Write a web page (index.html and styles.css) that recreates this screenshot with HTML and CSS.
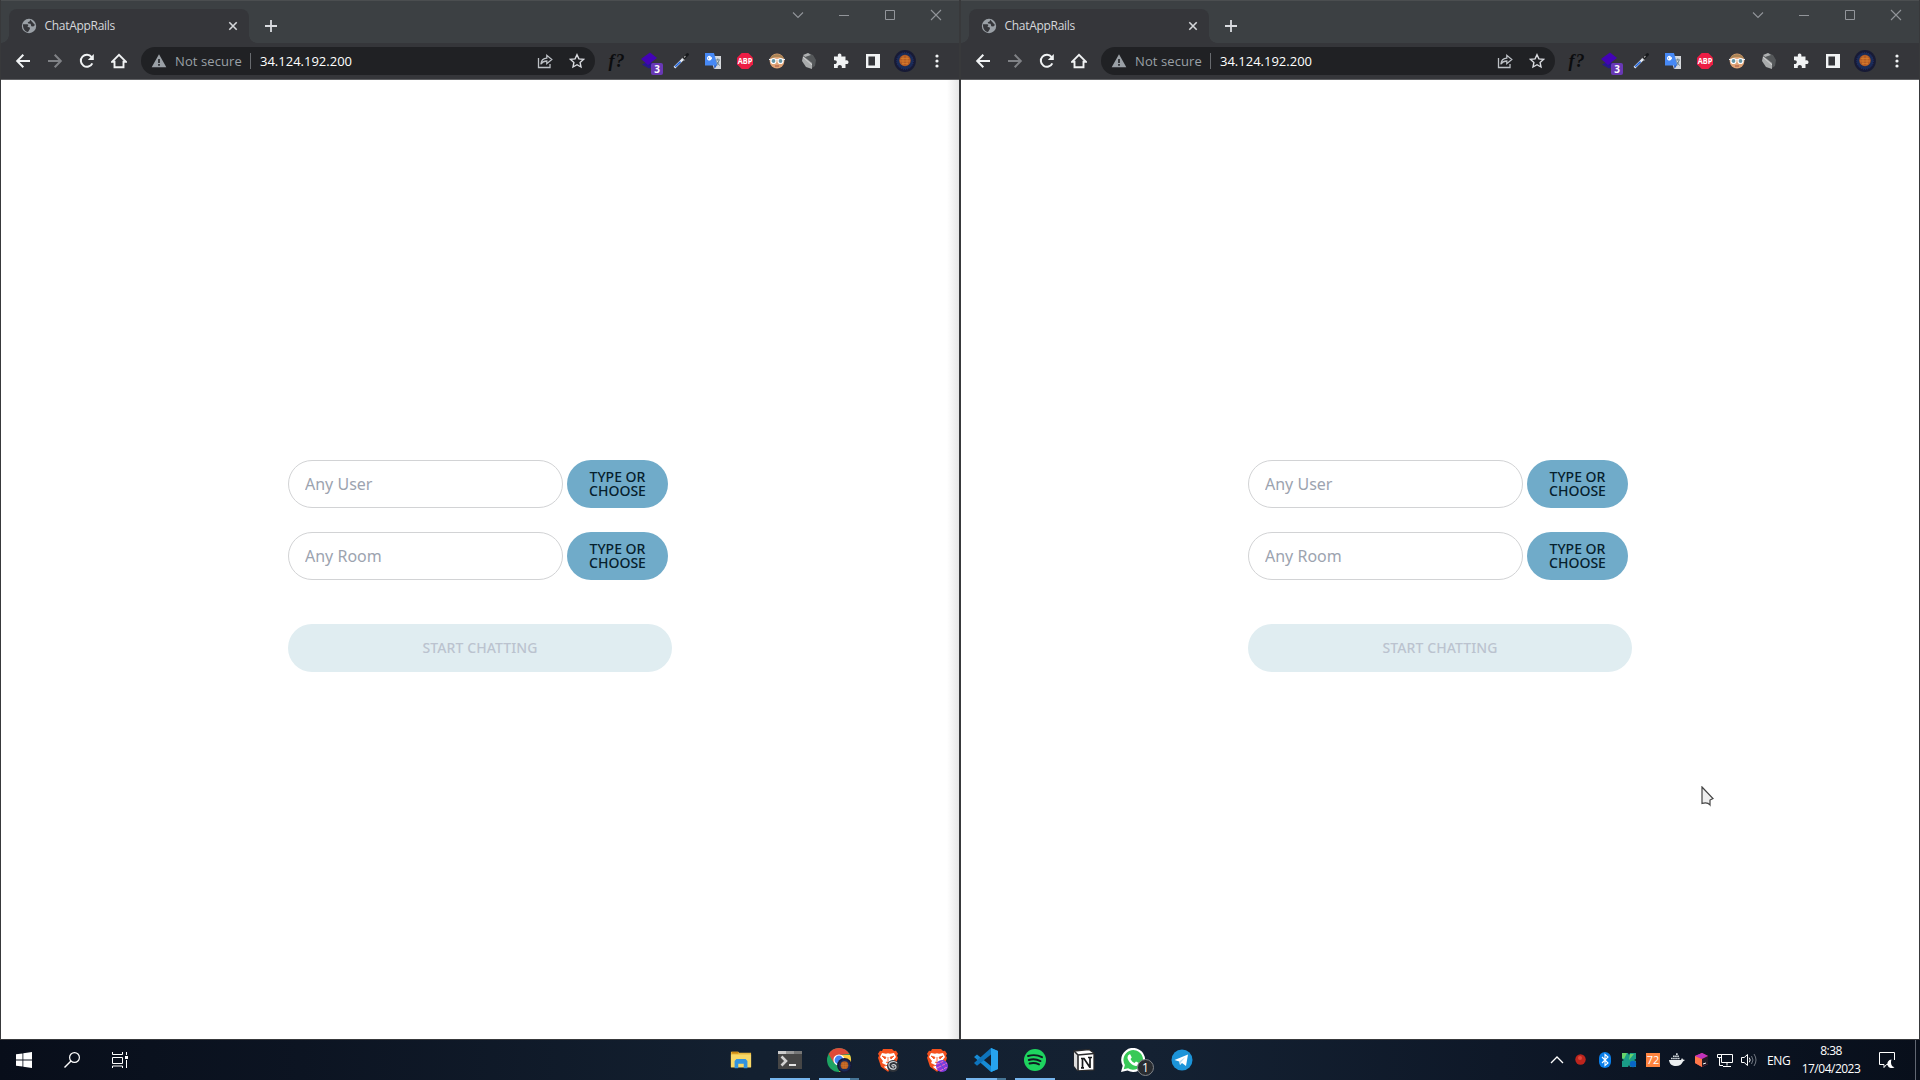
FILE: index.html
```html
<!DOCTYPE html>
<html lang="en">
<head>
<meta charset="utf-8">
<title>ChatAppRails</title>
<link rel="stylesheet" href="styles.css">
</head>
<body>
<svg class="sprite" aria-hidden="true">
  <symbol id="globe" viewBox="0 0 16 16"><circle cx="8" cy="8" r="7.2" fill="#9aa0a6"/><path d="M2 6.2h4.2c1 0 1.4 1 .8 1.8l-.6 1 2.2.2.4 1.6-2 3.2C3.8 13.400 1.800 10.600 2 6.200zM9.200 1.700 8.600 3.600 6.700 4.300 7.300 5.600 9.600 5.800 10.300 8.200 12.300 8.500 14 7" fill="#35363a"/></symbol>
  <symbol id="x" viewBox="0 0 16 16"><path d="M4.300 4.300l7.400 7.400M11.700 4.300l-7.400 7.400" stroke="#d5d7da" stroke-width="1.600"/></symbol>
  <symbol id="plus" viewBox="0 0 16 16"><path d="M8 2v12M2 8h12" stroke="#dadce0" stroke-width="1.800"/></symbol>
  <symbol id="chev" viewBox="0 0 16 16"><path d="M3 5.500l5 5 5-5" fill="none" stroke="#92959a" stroke-width="1.100"/></symbol>
  <symbol id="min" viewBox="0 0 16 16"><path d="M3 8.500h10" stroke="#92959a"/></symbol>
  <symbol id="max" viewBox="0 0 16 16"><path d="M3.500 3.500h9v9h-9z" fill="none" stroke="#92959a"/></symbol>
  <symbol id="close" viewBox="0 0 16 16"><path d="M3 3l10 10M13 3L3 13" stroke="#92959a" stroke-width="1.100"/></symbol>
  <symbol id="back" viewBox="0 0 16 16"><path d="M15 8H2.500M8.300 1.800L2.200 8l6.100 6.200" fill="none" stroke="currentColor" stroke-width="2"/></symbol>
  <symbol id="reload" viewBox="0 0 16 16"><path d="M13.300 10.300A6 6 0 1 1 12.600 4.100" fill="none" stroke="#f1f3f4" stroke-width="2"/><path d="M14.800 1v6H8.800z" fill="#f1f3f4"/></symbol>
  <symbol id="home" viewBox="0 0 16 16"><path d="M1.200 8.700L8 1.800l6.800 6.900h-2.300v5.500h-9V8.700z" fill="none" stroke="#f1f3f4" stroke-width="1.900"/></symbol>
  <symbol id="warn" viewBox="0 0 16 16"><path d="M8 1.300l7.300 13H.7z" fill="#9aa0a6"/><path d="M8 6v4M8 11v1.800" stroke="#202124" stroke-width="1.600"/></symbol>
  <symbol id="share" viewBox="0 0 16 16"><path d="M1.500 5v9.500h11.500V11M3.800 11.200c.4-4 2.500-6 6-6.100V2.300l5 4.200-5 4.200V8c-2.700 0-4.500.9-6 3.200z" fill="none" stroke="#bdc1c6" stroke-width="1.300"/></symbol>
  <symbol id="star" viewBox="0 0 16 16"><path d="M8 1.700l1.900 4.200 4.600.5-3.400 3 .9 4.600L8 11.700 4 14l.9-4.600-3.400-3 4.600-.5z" fill="none" stroke="#dadce0" stroke-width="1.400"/></symbol>
  <symbol id="stack" viewBox="0 0 20 20"><path d="M3 13.500l6-3 8 3-7 4z" fill="#26188c"/><path d="M2 8l9-6.500L18 7l-9 7z" fill="#4303b5"/></symbol>
  <symbol id="pen" viewBox="0 0 16 16"><path d="M10.500 5.500l4-4" stroke="#17191c" stroke-width="2.800" stroke-linecap="round"/><path d="M9 5l2.500 2.500M11 4.500l1.500-1.500" stroke="#9b9b9b" stroke-width="1.200"/><path d="M1.400 14.600L10 6.200" stroke="#e7edf7" stroke-width="2.400"/><path d="M2.200 13.800l5.400-5.200" stroke="#2366dc" stroke-width="1.500"/></symbol>
  <symbol id="translate" viewBox="0 0 16 16"><path d="M5 3h11v13H9z" fill="#d5d8dc"/><path d="M9 12h3l-2.500 4z" fill="#265bc7"/><path d="M0 0h9l3.500 12.500H0z" fill="#4789f5"/><path d="M7 5H4.700v1.200h1A1.700 1.700 0 1 1 5.500 4" fill="none" stroke="#fff" stroke-width="1.300"/><path d="M10.500 7h4.500M12.800 5.500V7M14 7.500c-.5 2-1.500 3.500-2.500 4.500M11.500 8.500l3 4" fill="none" stroke="#69808a"/></symbol>
  <symbol id="abp" viewBox="0 0 16 16"><path d="M4.700 0h6.600L16 4.700v6.600L11.300 16H4.700L0 11.300V4.700z" fill="#ed1e45"/><text x="8" y="11" text-anchor="middle" font-family="Open Sans,sans-serif" font-weight="700" font-size="8.500" textLength="14.600" lengthAdjust="spacingAndGlyphs" fill="#fff">ABP</text></symbol>
  <symbol id="face" viewBox="0 0 16 16"><circle cx="8" cy="8" r="7.400" fill="#e0a375"/><path d="M1 6C2.500-.5 13.500-.5 15 6L10 4 6 4z" fill="#aa8556"/><path d="M0 6.500h16" stroke="#f4f4f4" stroke-width="1.200"/><circle cx="4.500" cy="8" r="2.500" fill="#6695a5" stroke="#fff" stroke-width="1.200"/><circle cx="11.500" cy="8" r="2.500" fill="#6695a5" stroke="#fff" stroke-width="1.200"/><path d="M6 13h4" stroke="#a65242"/></symbol>
  <symbol id="dark" viewBox="0 0 16 16"><path d="M7 0l5 2 3 5-1 6-3 2L3 5z" fill="#55585a"/><path d="M2 2l5-2 3 2-6 2z" fill="#adafb0"/><path d="M2 3l9 7v6l-6-2-4-6z" fill="#a9abac"/><path d="M2 4l9 8" stroke="#d2d2d2"/></symbol>
  <symbol id="puzzle" viewBox="0 0 16 16"><path d="M1 3.500h4C4.300 1.500 5.300.5 6.600.5s2.300 1 1.700 3h4.200v4c2-.6 3 .4 3 1.700s-1 2.300-3 1.700v4.100H8.800c.6-2-.6-3-2-3s-2.500 1-2 3H1v-4c2 .3 2.800-.8 2.800-2S3 7 1 7.300z" fill="#f1f3f4"/></symbol>
  <symbol id="panel" viewBox="0 0 16 16"><path d="M1 1h14v14H1zM3.400 3.400v9.200H10V3.400z" fill="#f1f3f4" fill-rule="evenodd"/></symbol>
  <symbol id="avatar" viewBox="0 0 22 22"><circle cx="11" cy="11" r="10.900" fill="#171a35"/><circle cx="11" cy="11" r="8.300" fill="#192c58" stroke="#242f70" stroke-dasharray="1 1"/><circle cx="11" cy="10.500" r="5.700" fill="#b45b25"/><path d="M7 8.500h8M6 11h10M8 13.500h6M9 6v9M13 6v9" stroke="#dd812c" stroke-width=".7"/></symbol>
  <symbol id="dots" viewBox="0 0 16 16"><g fill="#f1f3f4"><circle cx="8" cy="3" r="1.600"/><circle cx="8" cy="8" r="1.600"/><circle cx="8" cy="13" r="1.600"/></g></symbol>
  <symbol id="brave" viewBox="0 0 22 24"><path d="M6 1h9l2 2 2-.2 2 3-1 2 1 2-3 9-7 5-7-5-3-9 1-2-1-2 2-3 2 .2z" fill="#f4511e"/><path d="M5 5l4 .7 2-.5 2 .5 4-.7 2 4-3 4 1 2-4 2 2 2-4 3-4-3 2-2-4-2 1-2-3-4z" fill="#fff"/><path d="M5 8l4 1.200L8 11zM17 8l-4 1.200 1 1.800zM9 14l2 1 2-1M11 9v5M8 18l3-1 3 1" fill="#f4511e" stroke="#f4511e" stroke-width=".8"/></symbol>
</svg>

<main class="desktop">
  <section class="window window-left">
    <header class="titlebar">
      <div class="tab"><svg class="i16"><use href="#globe"/></svg><span class="tab-title">ChatAppRails</span><svg class="i16"><use href="#x"/></svg></div>
      <svg class="i16 new-tab"><use href="#plus"/></svg>
      <div class="controls"><svg class="i16"><use href="#chev"/></svg><svg class="i16"><use href="#min"/></svg><svg class="i16"><use href="#max"/></svg><svg class="i16"><use href="#close"/></svg></div>
    </header>
    <nav class="toolbar">
      <div class="navs"><svg class="i16"><use href="#back"/></svg><svg class="i16 forward"><use href="#back"/></svg><svg class="i16"><use href="#reload"/></svg><svg class="i16"><use href="#home"/></svg></div>
      <div class="omnibox"><svg class="i16"><use href="#warn"/></svg><span class="insecure">Not secure</span><span class="url">34.124.192.200</span><svg class="i16"><use href="#share"/></svg><svg class="i16"><use href="#star"/></svg></div>
      <div class="extensions"><span class="fq">f?</span><span class="badged"><svg class="i20"><use href="#stack"/></svg><b>3</b></span><svg class="i16"><use href="#pen"/></svg><svg class="i16"><use href="#translate"/></svg><svg class="i16"><use href="#abp"/></svg><svg class="i16"><use href="#face"/></svg><svg class="i16"><use href="#dark"/></svg><svg class="i16"><use href="#puzzle"/></svg><svg class="i16"><use href="#panel"/></svg><svg class="i22"><use href="#avatar"/></svg><svg class="i16"><use href="#dots"/></svg></div>
    </nav>
    <div class="page">
      <form class="join">
        <div class="row"><input class="field" placeholder="Any User"><button type="button" class="choose">TYPE OR CHOOSE</button></div>
        <div class="row"><input class="field" placeholder="Any Room"><button type="button" class="choose">TYPE OR CHOOSE</button></div>
        <button type="button" class="start">START CHATTING</button>
      </form>
    </div>
  </section>
  <section class="window window-right">
    <header class="titlebar">
      <div class="tab"><svg class="i16"><use href="#globe"/></svg><span class="tab-title">ChatAppRails</span><svg class="i16"><use href="#x"/></svg></div>
      <svg class="i16 new-tab"><use href="#plus"/></svg>
      <div class="controls"><svg class="i16"><use href="#chev"/></svg><svg class="i16"><use href="#min"/></svg><svg class="i16"><use href="#max"/></svg><svg class="i16"><use href="#close"/></svg></div>
    </header>
    <nav class="toolbar">
      <div class="navs"><svg class="i16"><use href="#back"/></svg><svg class="i16 forward"><use href="#back"/></svg><svg class="i16"><use href="#reload"/></svg><svg class="i16"><use href="#home"/></svg></div>
      <div class="omnibox"><svg class="i16"><use href="#warn"/></svg><span class="insecure">Not secure</span><span class="url">34.124.192.200</span><svg class="i16"><use href="#share"/></svg><svg class="i16"><use href="#star"/></svg></div>
      <div class="extensions"><span class="fq">f?</span><span class="badged"><svg class="i20"><use href="#stack"/></svg><b>3</b></span><svg class="i16"><use href="#pen"/></svg><svg class="i16"><use href="#translate"/></svg><svg class="i16"><use href="#abp"/></svg><svg class="i16"><use href="#face"/></svg><svg class="i16"><use href="#dark"/></svg><svg class="i16"><use href="#puzzle"/></svg><svg class="i16"><use href="#panel"/></svg><svg class="i22"><use href="#avatar"/></svg><svg class="i16"><use href="#dots"/></svg></div>
    </nav>
    <div class="page">
      <form class="join">
        <div class="row"><input class="field" placeholder="Any User"><button type="button" class="choose">TYPE OR CHOOSE</button></div>
        <div class="row"><input class="field" placeholder="Any Room"><button type="button" class="choose">TYPE OR CHOOSE</button></div>
        <button type="button" class="start">START CHATTING</button>
      </form>
    </div>
  </section>
</main>

<footer class="taskbar">
  <div class="system">
    <svg class="i16" viewBox="0 0 16 16"><path d="M0 2.300l6.500-.9v6.100H0zM7.300 1.200L16 0v7.500H7.300zM0 8.400h6.500v6.200L0 13.700zM7.300 8.400H16V16l-8.700-1.300z" fill="#fff"/></svg>
    <svg class="i16" viewBox="0 0 16 16"><circle cx="10.500" cy="5.500" r="4.900" fill="none" stroke="#fff" stroke-width="1.200"/><path d="M7 9L.5 15.500" stroke="#fff" stroke-width="1.400"/></svg>
    <svg class="i16" viewBox="0 0 16 16"><path d="M.5 0v2.500h10V0M.5 5.500h10v6H.5zM.5 16v-2h10v2M14.500 0v3M14.500 8v8" fill="none" stroke="#fff"/><path d="M13 4h3v3h-3z" fill="#fff"/></svg>
  </div>
  <div class="apps">
    <span class="app"><svg class="i22" viewBox="0 0 24 24"><path d="M1 3h8l1 1h13v16H1z" fill="#e7b63f"/><path d="M1 6h22v14H1z" fill="#f8d867"/><path d="M2 3h7v2H2z" fill="#cd8a12"/><path d="M5 13l2-2h10l2 2v8h-4v-5H9v5H5z" fill="#3293df"/></svg></span>
    <span class="app running"><svg class="i24" viewBox="0 0 24 24"><path d="M0 3h24v18H0z" fill="#464646"/><path d="M0 3h8v3H0z" fill="#ccc"/><path d="M8 3h8v3H8z" fill="#999"/><path d="M16 3h8v3h-8z" fill="#777"/><path d="M3.500 8.500L8 13l-4.500 4.500" fill="none" stroke="#d2d2d2" stroke-width="2.600"/><path d="M11 17h7" stroke="#fff" stroke-width="1.700"/></svg></span>
    <span class="app running multiple"><svg class="i26" viewBox="0 0 26 26"><circle cx="13" cy="13" r="12" fill="#1da362"/><path d="M2.600 7A12 12 0 0 1 23.400 7L13 8 8 16z" fill="#dd4b39"/><path d="M13 8h11A12 12 0 0 1 13 25l6-9z" fill="#ffcd40"/><circle cx="13" cy="13" r="5.600" fill="#fff"/><circle cx="13" cy="13" r="4.400" fill="#4285f4"/></svg><svg class="profile" viewBox="0 0 22 22"><use href="#avatar"/></svg></span>
    <span class="app"><svg class="lion" viewBox="0 0 22 24"><use href="#brave"/></svg><svg class="profile small" viewBox="0 0 12 12"><circle cx="6" cy="6" r="6" fill="#30343a"/><path d="M10 3C7 0 1 2 2 6s7 4 7 1-5-3-4-1 2 1 2 0" fill="none" stroke="#d0d3d7" stroke-width="1.100"/></svg></span>
    <span class="app"><svg class="lion" viewBox="0 0 22 24"><use href="#brave"/></svg><svg class="profile small" viewBox="0 0 12 12"><circle cx="6" cy="6" r="6" fill="#8937dc"/><path d="M1 4l7-3M1 8l10-5M4 11l7-4" stroke="#ee72c2"/><path d="M3 1l6 10M7 0l4 7" stroke="#5451d6"/></svg></span>
    <span class="app running multiple"><svg class="i24" viewBox="0 0 24 24"><path d="M17 6v12L3 6.500 0 9l17 15 7-3V3l-7-3z" fill="#178bd5"/><path d="M17 0L0 15l3 2.800L17 6.500z" fill="#0e74bd"/><path d="M17 0l7 3v18l-7 3z" fill="#27a4ef"/></svg></span>
    <span class="app running"><svg class="i22" viewBox="0 0 22 22"><circle cx="11" cy="11" r="11" fill="#1ed45f"/><path d="M4 7c5-1.500 10-1 14 1.200M4.800 11c4-1.200 8-.8 11.700 1.100M5.500 14.500c3.500-.9 6.500-.6 9.500.9" fill="none" stroke="#101b22" stroke-width="1.900" stroke-linecap="round"/></svg></span>
    <span class="app"><svg class="i22" viewBox="0 0 22 22"><path d="M1 2l15-1.500L21 4v17L5 22l-4-5z" fill="#fff" stroke="#29292b" stroke-width="1.300"/><path d="M1 2l4 4v16l-4-5z" fill="#ddd"/><path d="M1 2l4 4 16-1.500M5 6v16" fill="none" stroke="#29292b" stroke-width="1.600"/><path d="M9.500 19V9.500M8 9.500h3l6 9M17 19V8.500M15 8.500h4M8 18.800h3" fill="none" stroke="#17191b" stroke-width="1.700"/></svg></span>
    <span class="app"><svg class="i24" viewBox="0 0 24 24"><path d="M0 24l1.700-6.200A12 12 0 1 1 6.500 22.500z" fill="#fff"/><path d="M2.700 21.300l1.200-4.300a9.800 9.800 0 1 1 3.200 3.200z" fill="#38c957"/><path d="M7 7.500l2-1.500 1.800 3.500L9.500 11c1 2 2 3 4 4l1.500-1.500L18 15c0 3-3 3.500-5 2.500-3-1.200-6.500-5-6.500-8z" fill="#fff"/></svg><span class="count">1</span></span>
    <span class="app"><svg class="i22" viewBox="0 0 22 22"><circle cx="11" cy="11" r="10.500" fill="#1c94d9"/><path d="M3.500 11L17 5.500 15 17l-4-3-2 2-.8-3.500z" fill="#fff"/><path d="M8.500 12.300L14.500 8l-4.700 5.600L9 16z" fill="#b6d9ee"/></svg></span>
  </div>
  <div class="tray">
    <div class="tray-icons">
      <svg class="i16" viewBox="0 0 16 16"><path d="M2 11l6-6 6 6" fill="none" stroke="#fff" stroke-width="1.300"/></svg>
      <svg class="i16" viewBox="0 0 16 16"><circle cx="7.500" cy="7.500" r="5.200" fill="#bd251d"/><circle cx="7" cy="6" r="2" fill="#df473a"/></svg>
      <svg class="i16" viewBox="0 0 16 16"><rect x="2" width="12" height="16" rx="6" fill="#087eea"/><path d="M5 5l6 6-3 2.500v-11L11 5l-6 6" fill="none" stroke="#fff" stroke-width="1.100"/></svg>
      <svg class="i16" viewBox="0 0 16 16"><path d="M1 1h6l1 2 1-2h6v6l-2 1 2 1v6H9l-1-2-1 2H1V9l2-1-2-1z" fill="#1a9d87"/><path d="M1 1h5l-3 6-2-1zM9 2h4L8 8z" fill="#67d36b"/><circle cx="12" cy="12" r="3.200" fill="#0866c6"/></svg>
      <svg class="i16" viewBox="0 0 16 16"><path d="M1 1h14v14H1z" fill="#ff843f"/><text x="8" y="12" text-anchor="middle" font-family="Open Sans,sans-serif" font-size="11" fill="#fff">72</text></svg>
      <svg class="i16" viewBox="0 0 16 16"><path d="M0 8h12l1-2 1 1.500 2 .5-2 1.500c-1.500 3-3.500 4.500-7 4.500S.5 12.500 0 8z" fill="#eceff1"/><path d="M2 6.500h9M4 4.300h6M7 2.100h2" stroke="#cfd5da" stroke-width="1.600" stroke-dasharray="1.700 .4"/></svg>
      <svg class="i16" viewBox="0 0 16 16"><path d="M2 4l7-3 6 3v8l-6 3-7-4z" fill="#f33b65"/><path d="M2 4l7 3v8l-7-4z" fill="#ff7848"/><path d="M2 4l7-3 6 3-6 3z" fill="#be33bd"/><path d="M9 7l6-3v8l-6 3z" fill="#221b25"/><path d="M10 12l3-1" stroke="#fff"/></svg>
      <svg class="i16" viewBox="0 0 16 16"><path d="M4.500 2.500h11v8h-11zM10 10.500v3M6 14.500h8" fill="none" stroke="#fff"/><path d="M0 2h4v4H0z" fill="#0c1523"/><path d="M.5 2.500h4v3h-4zM2.500 5.500v8H6" fill="none" stroke="#fff"/></svg>
      <svg class="i16" viewBox="0 0 16 16"><path d="M.5 5.500h2.700L6.500 2.500v11l-3.300-3H.5z" fill="none" stroke="#fff"/><path d="M8.300 5.700q1.700 2.300 0 4.600" fill="none" stroke="#fff"/><path d="M10.500 4q3 4 0 8M13 2q4 6 0 12" fill="none" stroke="#727983"/></svg>
    </div>
    <span class="lang">ENG</span>
    <div class="clock"><span>8:38</span><span>17/04/2023</span></div>
    <svg class="i16 notices" viewBox="0 0 16 16"><path d="M15.500 8V.5H.5v12H5v3l2.500-3H9" fill="none" stroke="#fff"/><path d="M12.500 7.500a4.300 4.300 0 1 0 3 7.500c-2.500.2-4.500-3-3-7.500z" fill="#fff"/></svg>
    <span class="show-desktop"></span>
  </div>
</footer>
<svg class="pointer" viewBox="0 0 14 21"><path d="M1 1l11 11.500-3 1.500 0 5C7 16.500 4 16.500 1 17.500z" fill="#eee" stroke="#444" stroke-width="1.200"/></svg>
</body>
</html>
```
FILE: styles.css
```css
* { box-sizing: border-box; }
body { margin: 0; width: 1920px; height: 1080px; overflow: hidden; display: flex; flex-direction: column; font-family: "Open Sans", "Noto Sans", sans-serif; background: #0c1523; }
svg { display: block; flex: none; }
.sprite { display: none; }
.i16 { width: 16px; height: 16px; }
.i20 { width: 20px; height: 20px; }
.i22 { width: 22px; height: 22px; }
.i24 { width: 24px; height: 24px; }
.i26 { width: 26px; height: 26px; }

.desktop { display: grid; grid-template-columns: 960px 960px; height: 1040px; }
.window { display: flex; flex-direction: column; border: solid #38393b; border-width: 0 1px 1px; background: #fff; }
.window-left .page { background: linear-gradient(90deg, transparent 946px, #e6e6e6 958px); }

.titlebar { display: flex; height: 43px; flex: none; padding: 9px 0 0 8px; background: #3c4043; border-top: 1px solid #4b4e50; }
.tab { position: relative; display: flex; align-items: center; width: 240px; height: 34px; margin-top: -1px; padding: 0 8px 0 12px; border-radius: 8px 8px 0 0; background: #35363a; }
.tab::before, .tab::after { content: ""; position: absolute; bottom: 0; width: 8px; height: 8px; }
.tab::before { left: -8px; background: radial-gradient(circle at 0 0, transparent 7.5px, #35363a 8px); }
.tab::after { right: -8px; background: radial-gradient(circle at 100% 0, transparent 7.5px, #35363a 8px); }
.tab-title { flex: 1; margin-left: 7.5px; font-size: 12px; line-height: 16px; color: #d5d8dc; letter-spacing: -.3px; }
.new-tab { margin: 8px 0 0 14px; }
.controls { display: flex; gap: 30px; margin: -3px 15px 0 auto; }
.toolbar { display: flex; align-items: center; height: 37px; flex: none; background: #35363a; border-bottom: 1px solid #606164; }
.navs { display: flex; gap: 16px; margin-left: 14px; color: #f1f3f4; }
.forward { transform: scaleX(-1); color: #808286; }
.omnibox { display: flex; align-items: center; flex: none; width: 454px; height: 28px; margin-left: 14px; padding: 0 10px; border-radius: 14px; background: #202124; font-size: 13px; line-height: 18px; }
.insecure { width: 76px; margin-left: 8px; border-right: 1px solid #686b6f; line-height: 16px; letter-spacing: .1px; color: #9aa0a6; }
.url { flex: 1; margin-left: 9px; color: #fff; white-space: nowrap; }
.omnibox .i16 + .i16 { margin-left: 16px; }
.extensions { display: grid; grid-template-columns: repeat(11, 32px); flex: none; justify-items: center; align-items: center; margin-left: 6px; }
.fq { font: italic bold 18px/18px "Liberation Serif", serif; letter-spacing: 1px; color: #0c0d0f; }
.badged { position: relative; }
.badged b { position: absolute; left: 12px; top: 12px; width: 12px; height: 12px; border-radius: 2px; background: #6838b5; color: #fff; font-size: 10px; line-height: 12px; text-align: center; }

.page { flex: 1; padding: 380px 0 0 287px; }
.join { display: flex; flex-direction: column; width: 384px; }
.row { display: flex; gap: 4px; margin-bottom: 24px; }
.field { width: 275px; height: 48px; padding: 0 16px; border: 1px solid #d2d3d5; border-radius: 24px; background: #fff; font: 16px/24px "Noto Sans", sans-serif; }
.field::placeholder { color: #9ca3af; opacity: 1; }
.choose, .start { height: 48px; border: 0; border-radius: 24px; font: 500 14px/14px "Noto Sans", sans-serif; }
.choose { width: 101px; padding: 0 16px; background: #70abc9; color: #06202d; }
.start { width: 384px; margin-top: 20px; background: #e0edf1; color: #bbc3cf; letter-spacing: .1px; }

.taskbar { display: grid; grid-template-columns: 716px 1fr 376px; height: 40px; background: linear-gradient(90deg, #080e1a 0, #0c1422 300px, #132030 750px, #142132 1150px, #0e1828 1500px, #080f1b 100%); }
.system { display: flex; align-items: center; gap: 32px; padding-left: 16px; }
.apps { display: grid; grid-template-columns: repeat(10, 49px); }
.app { position: relative; display: flex; align-items: center; justify-content: center; }
.running::after { content: ""; position: absolute; left: 5px; bottom: 0; width: 40px; height: 2px; background: #76b5ed; }
.multiple::after { background: linear-gradient(90deg, #76b5ed 31px, #467595 31px); }
.lion { width: 22px; height: 24px; }
.profile { position: absolute; left: 23px; top: 18px; width: 15px; height: 15px; }
.small { left: 24px; top: 20px; width: 12px; height: 12px; }
.count { position: absolute; left: 29px; top: 19px; width: 17px; height: 17px; border: 1px solid #81858a; border-radius: 50%; background: #292c30; color: #fff; font-size: 12px; line-height: 15px; text-align: center; }
.tray { display: flex; align-items: center; padding-left: 5px; color: #fff; font-size: 12px; }
.tray-icons { display: flex; gap: 8px; }
.lang { width: 24px; margin-left: 10px; letter-spacing: -.4px; }
.clock { display: flex; flex-direction: column; align-items: center; width: 60px; margin-left: 10px; line-height: 18px; letter-spacing: -.5px; }
.notices { margin-left: 18px; }
.show-desktop { width: 1px; height: 40px; margin-left: 20px; background: #616772; }
.pointer { position: absolute; left: 1701px; top: 786px; width: 14px; height: 21px; }
```
